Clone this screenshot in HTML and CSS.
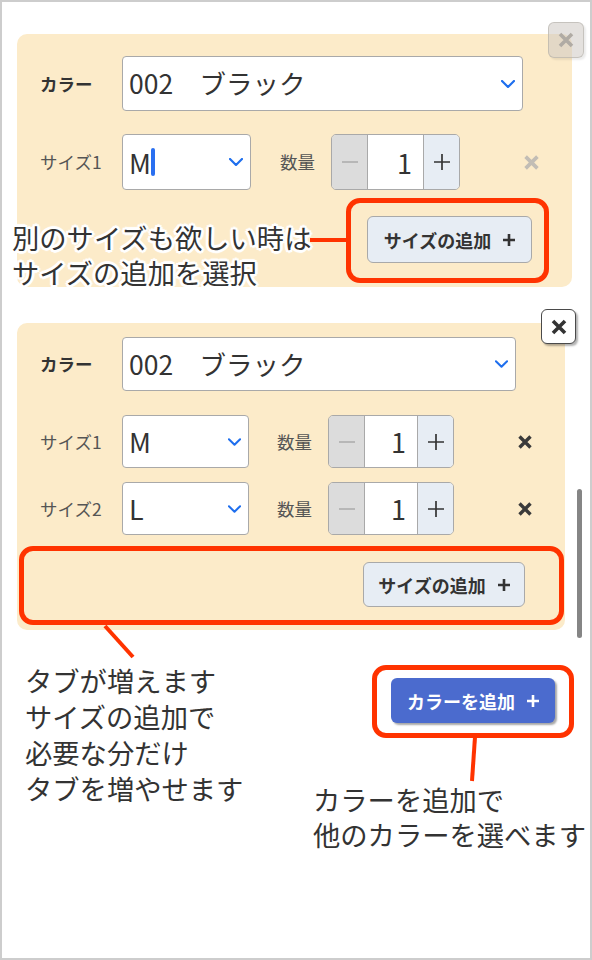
FILE: index.html
```html
<!DOCTYPE html>
<html lang="ja">
<head>
<meta charset="utf-8">
<title>カラー・サイズ選択</title>
<link rel="stylesheet" href="styles.css">
</head>
<body>
<div class="frame">

  <section class="panel panel-a">
    <button class="close close-faded" aria-label="閉じる">
      <svg width="16" height="16" viewBox="0 0 16 16"><path d="M2 2L14 14M14 2L2 14" /></svg>
    </button>
    <div class="row row-color">
      <span class="label label-bold">カラー</span>
      <div class="select select-color">
        <span class="select-text">002　ブラック</span>
        <svg class="chev" width="14" height="8" viewBox="0 0 14 8"><path d="M1 1L7 7L13 1" /></svg>
      </div>
    </div>
    <div class="row row-size">
      <span class="label">サイズ1</span>
      <div class="select select-size">
        <span class="select-text">M<span class="caret"></span></span>
        <svg class="chev" width="14" height="8" viewBox="0 0 14 8"><path d="M1 1L7 7L13 1" /></svg>
      </div>
      <span class="qty-label">数量</span>
      <div class="stepper">
        <span class="step step-minus"><svg width="18" height="18" viewBox="0 0 18 18"><path d="M1 9H17" /></svg></span>
        <span class="step-value">1</span>
        <span class="step step-plus"><svg width="18" height="18" viewBox="0 0 18 18"><path d="M1 9H17M9 1V17" /></svg></span>
      </div>
      <span class="remove remove-faded"><svg width="15" height="15" viewBox="0 0 14 14"><path d="M1.5 1.5L12.5 12.5M12.5 1.5L1.5 12.5" /></svg></span>
    </div>
    <div class="row row-add">
      <button class="add-size">サイズの追加<svg class="plus" width="12" height="12" viewBox="0 0 12 12"><path d="M0 6H12M6 0V12" /></svg></button>
    </div>
  </section>

  <section class="panel panel-b">
    <button class="close" aria-label="閉じる">
      <svg width="16" height="16" viewBox="0 0 16 16"><path d="M2 2L14 14M14 2L2 14" /></svg>
    </button>
    <div class="row row-color">
      <span class="label label-bold">カラー</span>
      <div class="select select-color">
        <span class="select-text">002　ブラック</span>
        <svg class="chev" width="13" height="8" viewBox="0 0 14 8"><path d="M1 1L7 7L13 1" /></svg>
      </div>
    </div>
    <div class="row row-size">
      <span class="label">サイズ1</span>
      <div class="select select-size">
        <span class="select-text">M</span>
        <svg class="chev" width="13" height="8" viewBox="0 0 14 8"><path d="M1 1L7 7L13 1" /></svg>
      </div>
      <span class="qty-label">数量</span>
      <div class="stepper">
        <span class="step step-minus"><svg width="18" height="18" viewBox="0 0 18 18"><path d="M1 9H17" /></svg></span>
        <span class="step-value">1</span>
        <span class="step step-plus"><svg width="18" height="18" viewBox="0 0 18 18"><path d="M1 9H17M9 1V17" /></svg></span>
      </div>
      <span class="remove"><svg width="14" height="14" viewBox="0 0 14 14"><path d="M1.5 1.5L12.5 12.5M12.5 1.5L1.5 12.5" /></svg></span>
    </div>
    <div class="row row-size row-size-2">
      <span class="label">サイズ2</span>
      <div class="select select-size">
        <span class="select-text">L</span>
        <svg class="chev" width="13" height="8" viewBox="0 0 14 8"><path d="M1 1L7 7L13 1" /></svg>
      </div>
      <span class="qty-label">数量</span>
      <div class="stepper">
        <span class="step step-minus"><svg width="18" height="18" viewBox="0 0 18 18"><path d="M1 9H17" /></svg></span>
        <span class="step-value">1</span>
        <span class="step step-plus"><svg width="18" height="18" viewBox="0 0 18 18"><path d="M1 9H17M9 1V17" /></svg></span>
      </div>
      <span class="remove"><svg width="14" height="14" viewBox="0 0 14 14"><path d="M1.5 1.5L12.5 12.5M12.5 1.5L1.5 12.5" /></svg></span>
    </div>
    <div class="row row-add">
      <button class="add-size">サイズの追加<svg class="plus" width="12" height="12" viewBox="0 0 12 12"><path d="M0 6H12M6 0V12" /></svg></button>
    </div>
  </section>

  <div class="scrollbar"></div>

  <div class="annotations">
    <svg class="connectors" width="592" height="960" viewBox="0 0 592 960">
      <path d="M310 240H348" />
      <path d="M105 626L133 657" />
      <path d="M475 737L472 781" />
    </svg>
    <div class="callout callout-1"></div>
    <div class="callout callout-2"></div>
    <div class="callout callout-3">
      <button class="add-color">カラーを追加<svg class="plus" width="12" height="12" viewBox="0 0 12 12"><path d="M0 6H12M6 0V12" /></svg></button>
    </div>
    <p class="note note-1">別のサイズも欲しい時は<br>サイズの追加を選択</p>
    <p class="note note-2">タブが増えます<br>サイズの追加で<br>必要な分だけ<br>タブを増やせます</p>
    <p class="note note-3">カラーを追加で<br>他のカラーを選べます</p>
  </div>
</div>
</body>
</html>
```

FILE: styles.css
```css
* { box-sizing: border-box; }

html, body {
  margin: 0;
  padding: 0;
  background: #fff;
}

body {
  font-family: "Noto Sans CJK JP", "Noto Sans", sans-serif;
  color: #333;
}

.frame {
  position: relative;
  width: 592px;
  height: 960px;
  border: 2px solid #cdcdcd;
  padding: 32px 0 0 15px;
  overflow: hidden;
  background: #fff;
}

/* ---------- panels ---------- */
.panel {
  position: relative;
  background: #fcebc9;
  border-radius: 10px;
  display: flex;
  flex-direction: column;
}

.panel-a {
  width: 555px;
  height: 253px;
  padding: 22px 33px 0 23px;
}

.panel-b {
  width: 548px;
  height: 307px;
  margin-top: 36px;
  padding: 14px 33px 0 23px;
}

.row {
  display: flex;
  align-items: center;
}

.label {
  width: 82px;
  flex: none;
  font-size: 17.5px;
  color: #555;
  line-height: 1;
}

.label-bold {
  font-weight: 700;
  color: #333;
}

/* ---------- select ---------- */
.select {
  background: #fff;
  border: 1px solid #a9a9a9;
  border-radius: 4px;
  display: flex;
  align-items: center;
  justify-content: space-between;
  padding: 0 7px 0 6px;
  flex: none;
}

.select-text {
  font-size: 26.5px;
  color: #333;
  line-height: 1;
  display: flex;
  align-items: center;
  white-space: pre;
}

.select-size .select-text { font-size: 27px; }

.caret {
  display: inline-block;
  width: 4px;
  height: 28px;
  background: #2a6ff0;
  border-radius: 2px;
}

.chev path {
  fill: none;
  stroke: #1f6fee;
  stroke-width: 2.2;
  stroke-linecap: round;
  stroke-linejoin: round;
}

.panel-a .select-color { width: 401px; height: 55px; }
.panel-b .select-color { width: 394px; height: 54px; }

.panel-a .row-size { margin-top: 23px; }
.panel-a .select-size { width: 129px; height: 56px; }

.panel-b .row-size { margin-top: 24px; }
.panel-b .row-size-2 { margin-top: 14px; }
.panel-b .select-size { width: 127px; height: 53px; }

.qty-label {
  font-size: 17.5px;
  color: #555;
  width: 36px;
  line-height: 1;
  flex: none;
}

.panel-a .qty-label { margin: 0 15px 0 29px; }
.panel-b .qty-label { margin: 0 15px 0 28px; }

/* ---------- stepper ---------- */
.stepper {
  display: flex;
  border: 1px solid #a9a9a9;
  border-radius: 5px;
  overflow: hidden;
  flex: none;
}

.panel-a .stepper { width: 129px; height: 56px; }
.panel-b .stepper { width: 126px; height: 53px; }

.step {
  display: flex;
  align-items: center;
  justify-content: center;
  flex: none;
  width: 36px;
}

.step-minus {
  background: #dcdcdc;
  border-right: 1px solid #a9a9a9;
}

.step-plus {
  background: #e7edf4;
  border-left: 1px solid #a9a9a9;
}

.step-minus path {
  stroke: #ababab;
  stroke-width: 1.5;
  fill: none;
}

.step-plus path {
  stroke: #333;
  stroke-width: 1.7;
  fill: none;
}

.step-value {
  flex: 1;
  background: #fff;
  display: flex;
  align-items: center;
  justify-content: flex-end;
  padding-right: 11px;
  font-size: 27px;
  line-height: 1;
  color: #333;
}

/* ---------- remove ---------- */
.remove {
  margin-left: auto;
  display: flex;
}

.remove path {
  stroke: #3a3a3a;
  stroke-width: 3.4;
  fill: none;
}

.remove-faded path { stroke: #c2bdb5; }

/* ---------- add size ---------- */
.row-add {
  justify-content: flex-end;
  padding-right: 7px;
}

.panel-a .row-add { margin-top: 26px; }
.panel-b .row-add { margin-top: 27px; }

.add-size {
  font-family: inherit;
  font-size: 18px;
  font-weight: 700;
  color: #333;
  background: #e7edf4;
  border: 1px solid #a9a9a9;
  border-radius: 6px;
  display: flex;
  align-items: center;
  justify-content: center;
  padding: 0;
  line-height: 1;
}

.panel-a .add-size { width: 165px; height: 47px; }
.panel-b .add-size { width: 162px; height: 45px; }

.plus {
  margin-left: 12px;
  flex: none;
}

.plus path {
  stroke: #333;
  stroke-width: 2.6;
  fill: none;
}

/* ---------- close ---------- */
.close {
  position: absolute;
  width: 36px;
  height: 36px;
  padding: 0;
  background: #fff;
  border: 1.5px solid #4a4a4a;
  border-radius: 6px;
  box-shadow: 2px 2px 2px rgba(0, 0, 0, 0.3);
  display: flex;
  align-items: center;
  justify-content: center;
}

.close path {
  stroke: #333;
  stroke-width: 3.6;
  fill: none;
}

.panel-a .close { top: -12px; right: -12px; }
.panel-b .close { top: -14px; right: -11px; width: 35px; height: 35px; }

.close-faded {
  background: rgba(205, 200, 195, 0.55);
  border: 1.5px solid rgba(170, 165, 160, 0.5);
  box-shadow: 2px 2px 2px rgba(0, 0, 0, 0.08);
}

.close-faded path { stroke: #b0aba4; }

/* ---------- scrollbar ---------- */
.scrollbar {
  position: absolute;
  left: 575px;
  top: 487px;
  width: 5px;
  height: 149px;
  background: #858585;
  border-radius: 3px;
}

/* ---------- annotations ---------- */
.annotations {
  position: absolute;
  left: -2px;
  top: -2px;
  width: 592px;
  height: 960px;
  pointer-events: none;
}

.connectors {
  position: absolute;
  left: 0;
  top: 0;
}

.connectors path {
  stroke: #ff3300;
  stroke-width: 4;
  fill: none;
}

.callout {
  position: absolute;
  border: 5px solid #ff3300;
  border-radius: 14px;
}

.callout-1 { left: 346px; top: 198px; width: 203px; height: 85px; }
.callout-2 { left: 19px; top: 546px; width: 545px; height: 79px; }
.callout-3 {
  left: 372px;
  top: 665px;
  width: 202px;
  height: 73px;
  display: flex;
  align-items: center;
  justify-content: center;
  padding-bottom: 2px;
}

.add-color {
  width: 164px;
  height: 45px;
  background: #4b6bce;
  color: #fff;
  border: none;
  border-radius: 6px;
  box-shadow: 2px 2px 2px rgba(0, 0, 0, 0.35);
  font-family: inherit;
  font-size: 18px;
  font-weight: 700;
  display: flex;
  align-items: center;
  justify-content: center;
  padding: 0;
  line-height: 1;
}

.add-color .plus path { stroke: #fff; }

.note {
  position: absolute;
  margin: 0;
  font-family: "Liberation Sans", "Noto Sans CJK JP", sans-serif;
  font-size: 27.3px;
  color: #333;
  white-space: nowrap;
}

.note-1 {
  left: 12px;
  top: 222px;
  line-height: 35px;
  text-shadow:
    2px 0 0 #fff, -2px 0 0 #fff, 0 2px 0 #fff, 0 -2px 0 #fff,
    2px 2px 0 #fff, -2px -2px 0 #fff, 2px -2px 0 #fff, -2px 2px 0 #fff,
    3px 0 1px #fff, -3px 0 1px #fff, 0 3px 1px #fff, 0 -3px 1px #fff;
}

.note-2 {
  left: 25px;
  top: 665px;
  line-height: 36px;
}

.note-3 {
  left: 313px;
  top: 784px;
  line-height: 35px;
}
```
